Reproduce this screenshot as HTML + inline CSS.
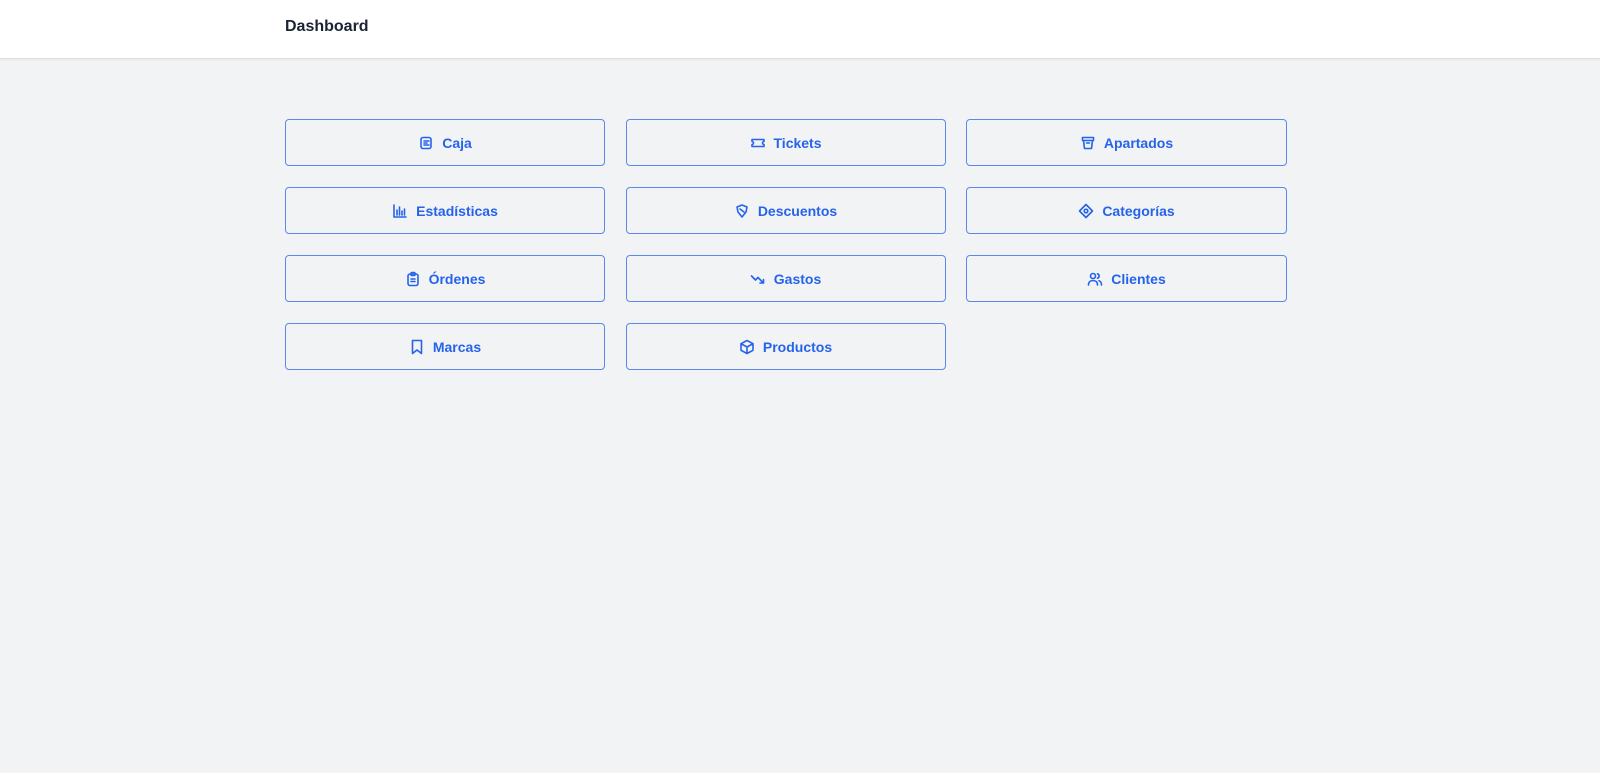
<!DOCTYPE html>
<html><head><meta charset="utf-8"><style>
*{box-sizing:border-box;margin:0;padding:0}
html,body{width:1600px;height:773px;overflow:hidden;background:#f2f3f5;font-family:"Liberation Sans",sans-serif}
.hdr{position:absolute;left:0;top:0;width:1600px;height:59px;background:#fff;border-bottom:1px solid #dcdde0;box-shadow:0 1px 2px rgba(0,0,0,.05)}
.hdr h1{position:absolute;left:285px;top:18px;font-size:16px;font-weight:700;color:#1b2333;letter-spacing:0}
.grid{position:absolute;left:285px;top:119px;display:grid;grid-template-columns:320px 320px 321px;column-gap:20.5px;row-gap:21px}
.b{height:47px;border:1px solid #5b87ee;border-radius:4px;display:flex;align-items:center;justify-content:center;color:#2563eb;font-size:14px;font-weight:700;gap:8px}
.b svg{width:16px;height:16px;fill:none;stroke:#2563eb;stroke-width:1.6;stroke-linecap:round;stroke-linejoin:round}
</style></head><body>
<div class="hdr"><h1>Dashboard</h1></div>
<div class="grid">
<div class="b"><svg viewBox="0 0 16 16"><rect x="3" y="2.5" width="10" height="11" rx="2"/><path d="M6 6h5M6 8h3M6 10h5"/></svg>Caja</div>
<div class="b"><svg viewBox="0 0 16 16"><path d="M2 4.5h12v2a1.5 1.5 0 0 0 0 3v2H2v-2a1.5 1.5 0 0 0 0-3z"/></svg>Tickets</div>
<div class="b"><svg viewBox="0 0 16 16"><path d="M2.5 2.5h11v3h-11zM3.5 5.5l1 8h7l1-8M6.5 8h3"/></svg>Apartados</div>
<div class="b"><svg viewBox="0 0 16 16"><path d="M2 2v12h12M5 12V7M7.5 12V4M10 12V8M12.5 12V6"/></svg>Estadísticas</div>
<div class="b"><svg viewBox="0 0 16 16"><path d="M3 4l5-2 5 2-1 5-4 5-4-5z"/><path d="M6 6l4 3"/></svg>Descuentos</div>
<div class="b"><svg viewBox="0 0 16 16"><path d="M8 1.5L14.5 8 8 14.5 1.5 8z"/><circle cx="8" cy="8" r="1.8"/></svg>Categorías</div>
<div class="b"><svg viewBox="0 0 16 16"><rect x="3" y="3" width="10" height="11.5" rx="2"/><rect x="6" y="1.5" width="4" height="3" rx="1"/><path d="M6 8h4M6 10.5h4"/></svg>Órdenes</div>
<div class="b"><svg viewBox="0 0 16 16"><path d="M1.5 5l4 4 2.5-2.5 5.5 5.5M13.5 8.5v3.5H10"/></svg>Gastos</div>
<div class="b"><svg viewBox="0 0 16 16"><circle cx="6" cy="5" r="2.5"/><path d="M1.5 14c0-3 2-4.5 4.5-4.5s4.5 1.5 4.5 4.5M10.5 2.8a2.3 2.3 0 0 1 0 4.4M12 9.8c1.5.5 2.5 2 2.5 4.2"/></svg>Clientes</div>
<div class="b"><svg viewBox="0 0 16 16"><path d="M3.5 1.5h9v13L8 11l-4.5 3.5z"/></svg>Marcas</div>
<div class="b"><svg viewBox="0 0 16 16"><path d="M8 1.5l6 3.2v6.6L8 14.5 2 11.3V4.7zM2 4.7L8 8l6-3.3M8 8v6.5"/></svg>Productos</div>
</div>
</body></html>
